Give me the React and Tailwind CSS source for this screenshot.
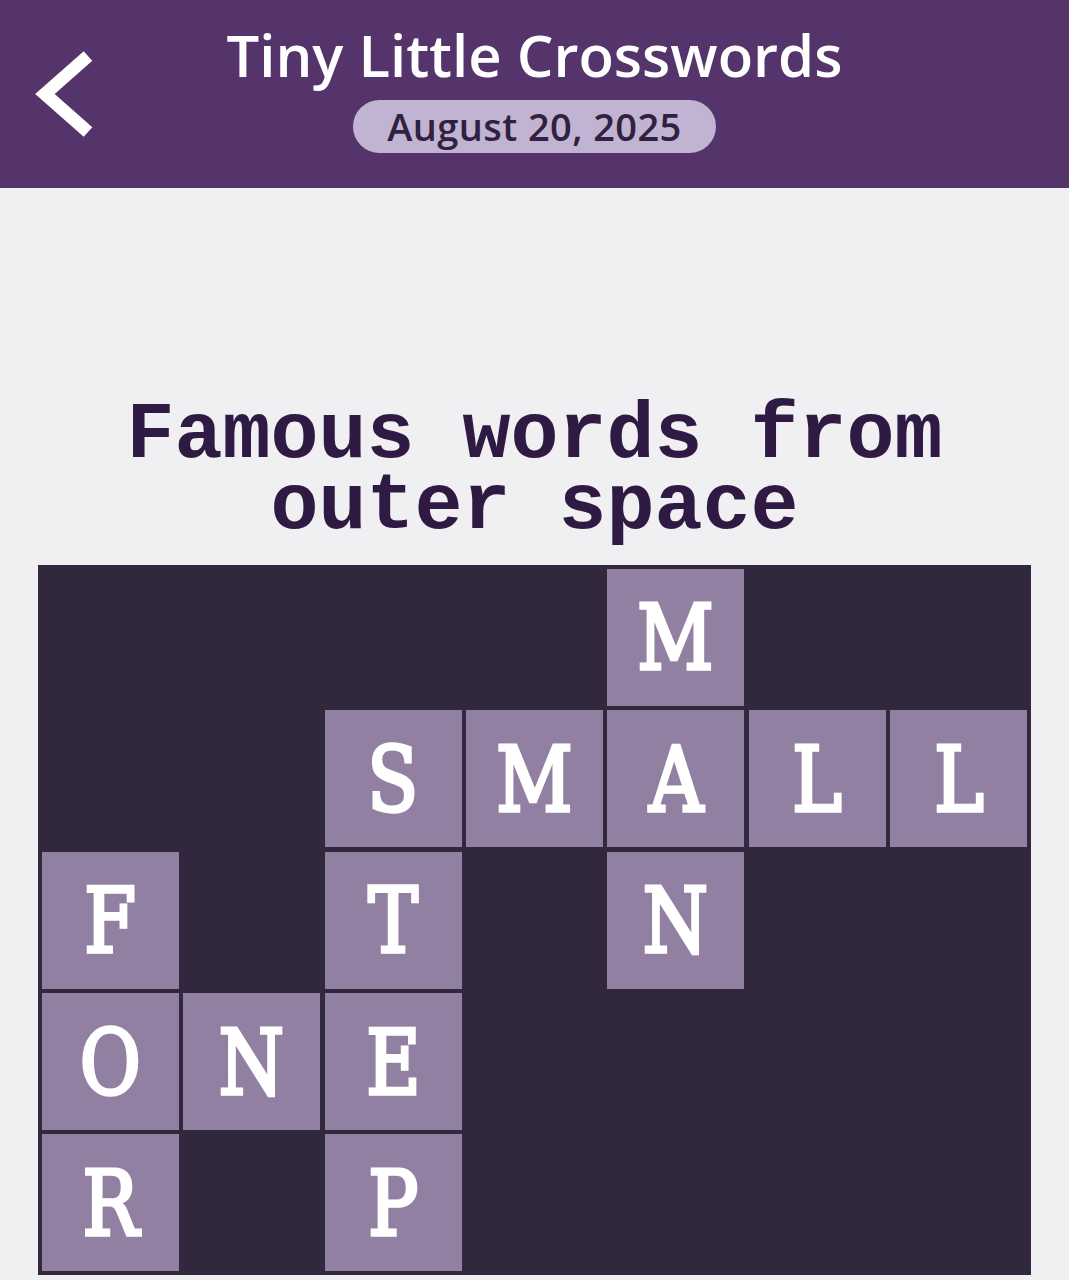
import React from 'react';

// 5 rows x 7 columns, '.' marks a blocked square
const GRID = [
    '....M..',
    '..SMALL',
    'F.T.N..',
    'ONE....',
    'R.P....',
];

const BackChevron = () => (
    <svg width="70" height="100" viewBox="0 0 70 100" fill="none">
        <polyline
            points="58,6 15,44 58,82"
            stroke="#ffffff"
            strokeWidth="13"
            strokeLinecap="butt"
            strokeLinejoin="miter"
        />
    </svg>
);

const Cell = ({ letter }) => {
    if (letter === '.') {
        return <div className="aspect-square" />;
    }
    return (
        <div className="aspect-square bg-[#9180a2] flex items-center justify-center">
            <span className="text-white text-[90px] leading-none font-['DejaVu_Serif_Condensed','DejaVu_Serif',serif] [-webkit-text-stroke:3.5px_#ffffff] [paint-order:stroke_fill] scale-x-[0.92] translate-y-[1px]">
                {letter}
            </span>
        </div>
    );
};

const App = () => {
    return (
        <div className="min-h-screen bg-[#f0f0f2]">
            <header className="h-[188px] bg-[#55336b] grid grid-cols-[1fr_auto_1fr]">
                <div className="flex items-start pl-[30px] pt-[50px]">
                    <BackChevron />
                </div>
                <div className="flex flex-col items-center pt-[24px]">
                    <h1 className="text-white text-[58px] leading-[62px] font-semibold font-['Open_Sans',sans-serif]">
                        Tiny Little Crosswords
                    </h1>
                    <div className="mt-[14px] h-[53px] w-[363px] rounded-full bg-[#c1b3d2] flex items-center justify-center">
                        <span className="text-[#32203f] text-[38px] tracking-[0.4px] font-semibold font-['Open_Sans',sans-serif] leading-none -translate-y-[1px]">
                            August 20, 2025
                        </span>
                    </div>
                </div>
                <div />
            </header>

            <main className="flex flex-col items-center pt-[212px]">
                <h2 className="text-center text-[#2e1a42] text-[80px] leading-[71px] font-bold font-['Liberation_Mono',monospace]">
                    <span className="block h-[71px]">Famous words from</span>
                    <span className="block h-[71px]">outer space</span>
                </h2>

                <div className="mt-[23px] w-[993px] bg-[#32283e] p-[4px] grid grid-cols-7 gap-[4.5px]">
                    {GRID.map((row, r) =>
                        row.split('').map((ch, c) => <Cell key={`${r}-${c}`} letter={ch} />)
                    )}
                </div>
            </main>
        </div>
    );
};

export default App;
